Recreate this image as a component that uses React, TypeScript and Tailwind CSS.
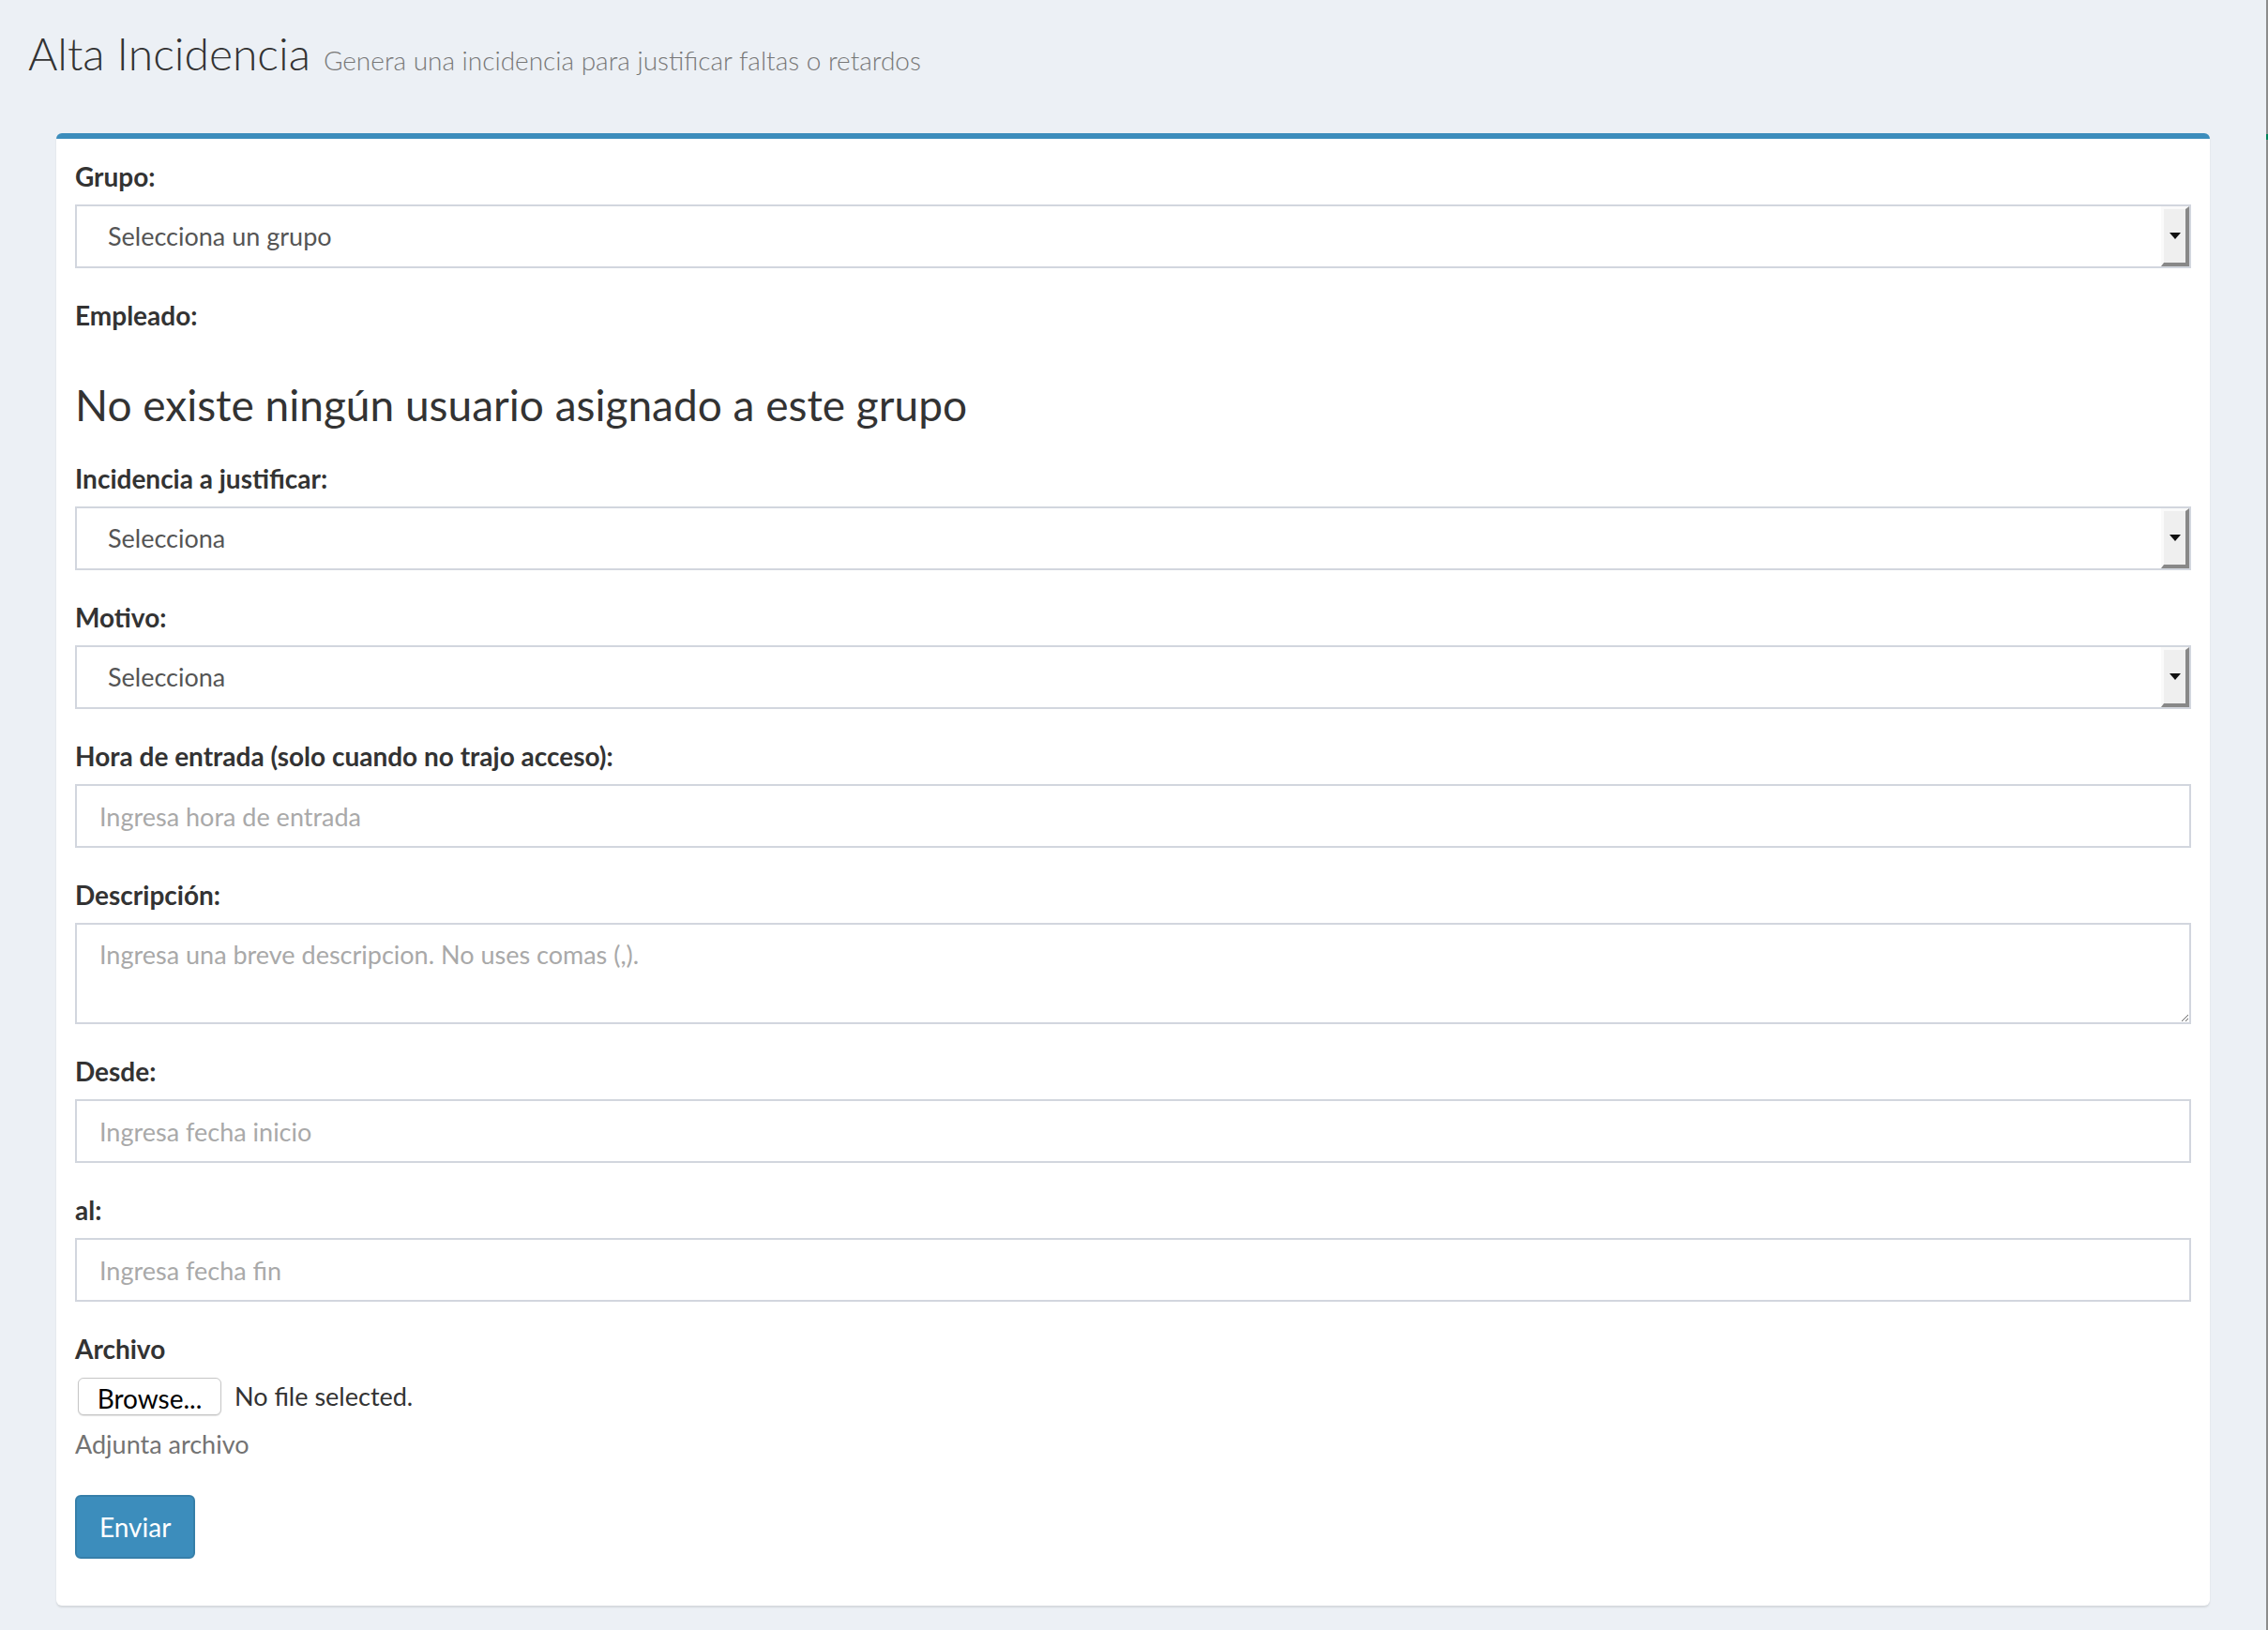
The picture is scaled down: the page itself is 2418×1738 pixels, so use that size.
import React from 'react';

const font = { fontFamily: 'Lato, "Noto Sans", sans-serif' };

const Label: React.FC<{ children: React.ReactNode }> = ({ children }) => (
  <label className="block text-[28px] leading-[40px] font-bold text-[#333] mb-[10px]">{children}</label>
);

const FakeSelect: React.FC<{ value: string }> = ({ value }) => (
  <div className="flex h-[68px] items-stretch border-2 border-[#d2d6de] bg-white">
    <span className="flex-1 flex items-center pl-[33px] text-[27px] text-[#555]">{value}</span>
    <div className="w-[30px] flex items-center justify-center bg-[#efefef] border-t-[3px] border-l-[3px] border-t-[#fafafa] border-l-[#fafafa] border-r-[4px] border-b-[4px] border-r-[#888] border-b-[#888]">
      <svg width="12" height="8" viewBox="0 0 12 8">
        <polygon points="0,0 12,0 6,7" fill="#111" />
      </svg>
    </div>
  </div>
);

const TextInput: React.FC<{ placeholder: string }> = ({ placeholder }) => (
  <input
    type="text"
    placeholder={placeholder}
    className="block w-full h-[68px] border-2 border-[#d2d6de] bg-white px-[24px] text-[27px] text-[#555] placeholder:text-[#a9a9a9] outline-none"
  />
);

export default function App() {
  return (
    <div className="min-h-screen bg-[#ecf0f5] flex" style={font}>
      <div className="flex-1">
        {/* Header */}
        <div className="pt-[30px] px-[30px] flex items-baseline">
          <h1 className="text-[48px] leading-[53px] font-light text-[#333]">Alta Incidencia</h1>
          <small className="ml-[14px] text-[28px] font-light text-[#777]">
            Genera una incidencia para justificar faltas o retardos
          </small>
        </div>

        {/* Box */}
        <div className="px-[60px] pt-[57px] pb-[26px]">
          <div className="bg-white border-t-[6px] border-[#3c8dbc] rounded-[6px] shadow-[0_2px_2px_rgba(0,0,0,0.1)] px-[20px] pt-[20px] pb-[50px]">
            <div className="mb-[30px]">
              <Label>Grupo:</Label>
              <FakeSelect value="Selecciona un grupo" />
            </div>

            <div>
              <Label>Empleado:</Label>
              <h3 className="mt-[49px] mb-[32px] text-[46px] leading-[53px] text-[#333]">
                No existe ningún usuario asignado a este grupo
              </h3>
            </div>

            <div className="mb-[30px]">
              <Label>Incidencia a justificar:</Label>
              <FakeSelect value="Selecciona" />
            </div>

            <div className="mb-[30px]">
              <Label>Motivo:</Label>
              <FakeSelect value="Selecciona" />
            </div>

            <div className="mb-[30px]">
              <Label>Hora de entrada (solo cuando no trajo acceso):</Label>
              <TextInput placeholder="Ingresa hora de entrada" />
            </div>

            <div className="mb-[30px]">
              <Label>Descripción:</Label>
              <textarea
                rows={2}
                placeholder="Ingresa una breve descripcion. No uses comas (,)."
                className="block w-full h-[108px] border-2 border-[#d2d6de] bg-white px-[24px] py-[12px] text-[27px] leading-[40px] text-[#555] placeholder:text-[#a9a9a9] outline-none"
              />
            </div>

            <div className="mb-[30px]">
              <Label>Desde:</Label>
              <TextInput placeholder="Ingresa fecha inicio" />
            </div>

            <div className="mb-[30px]">
              <Label>al:</Label>
              <TextInput placeholder="Ingresa fecha fin" />
            </div>

            <div className="mb-[34px]">
              <Label>Archivo</Label>
              <div className="flex items-center h-[42px]">
                <button className="ml-[3px] h-[40px] w-[153px] bg-white border border-[#c6c6c6] rounded-[6px] shadow-[0_1px_1px_rgba(0,0,0,0.12)] text-[28px] text-black">
                  Browse...
                </button>
                <span className="ml-[14px] text-[27px] text-[#333]">No file selected.</span>
              </div>
              <p className="mt-[10px] text-[27px] leading-[40px] text-[#737373]">Adjunta archivo</p>
            </div>

            <button className="h-[68px] px-[24px] bg-[#3c8dbc] border-2 border-[#367fa9] rounded-[6px] text-[28px] text-white">
              Enviar
            </button>
          </div>
        </div>
      </div>

      {/* edge of neighbouring panel */}
      <div className="w-[2px] bg-[#8c8c8c]">
        <div className="mt-[143px] h-[6px] bg-[#00845a]" />
      </div>
    </div>
  );
}
